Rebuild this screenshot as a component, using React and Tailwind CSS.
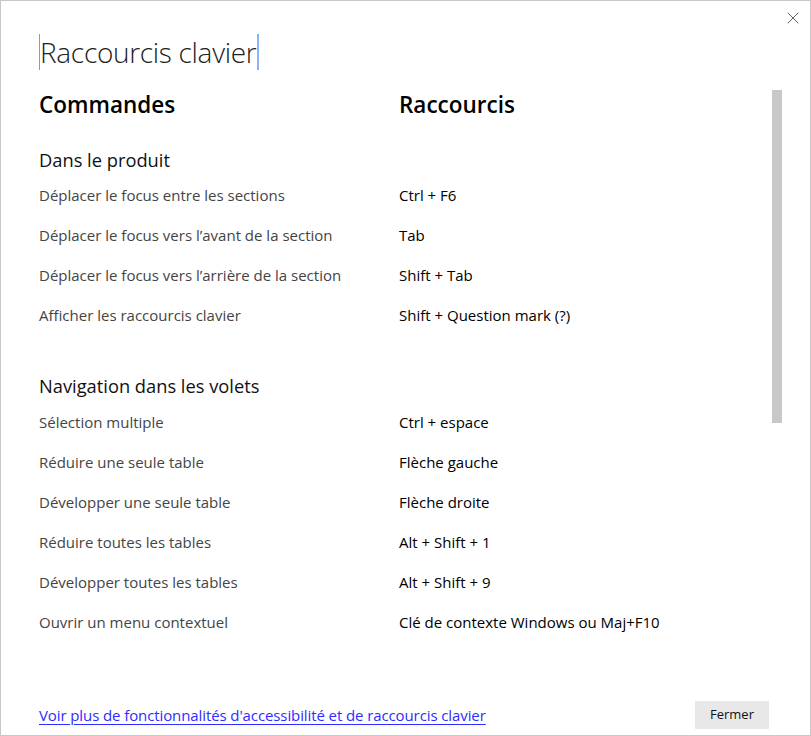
import { X } from 'lucide-react'

const sections = [
  {
    title: 'Dans le produit',
    mt: 'mt-[24px]',
    rows: [
      ['Déplacer le focus entre les sections', 'Ctrl + F6'],
      ['Déplacer le focus vers l’avant de la section', 'Tab'],
      ['Déplacer le focus vers l’arrière de la section', 'Shift + Tab'],
      ['Afficher les raccourcis clavier', 'Shift + Question mark (?)'],
    ],
  },
  {
    title: 'Navigation dans les volets',
    mt: 'mt-[35px]',
    rows: [
      ['Sélection multiple', 'Ctrl + espace'],
      ['Réduire une seule table', 'Flèche gauche'],
      ['Développer une seule table', 'Flèche droite'],
      ['Réduire toutes les tables', 'Alt + Shift + 1'],
      ['Développer toutes les tables', 'Alt + Shift + 9'],
      ['Ouvrir un menu contextuel', 'Clé de contexte Windows ou Maj+F10'],
    ],
  },
]

export default function App() {
  return (
    <div
      className="relative w-[811px] h-[736px] bg-white border border-[#c8c8c8] flex flex-col"
      style={{ fontFamily: '"Open Sans", "Noto Sans", sans-serif' }}
    >
      {/* Close */}
      <button className="absolute top-[6px] right-[6px] w-[22px] h-[22px] flex items-center justify-center text-[#555]">
        <X className="w-[20px] h-[20px]" strokeWidth={1.1} />
      </button>

      {/* Title */}
      <div className="pl-[38px] pt-[33px]">
        <h1 className="inline-block h-[36px] leading-[36px] text-[28px] font-light text-[#222] border-l border-[#999] border-r-2 border-r-[#8ab4f8] pr-[1px] tracking-[-0.3px]">
          Raccourcis clavier
        </h1>
      </div>

      {/* Body */}
      <div className="flex flex-1 pl-[38px] mt-[20px]">
        <div className="flex-1">
          <div className="flex h-[30px] items-center text-[22.5px] font-semibold text-black">
            <div className="w-[360px]">Commandes</div>
            <div>Raccourcis</div>
          </div>

          {sections.map((s) => (
            <div key={s.title} className={s.mt}>
              <h2 className="h-[31px] leading-[31px] text-[18.3px] text-[#111]">{s.title}</h2>
              <div className={s.title === 'Dans le produit' ? '' : 'mt-[1px]'}>
                {s.rows.map(([cmd, key]) => (
                  <div key={cmd} className="flex h-[40px] items-center text-[15px]">
                    <div className="w-[360px] text-[#444]">{cmd}</div>
                    <div className="text-black">{key}</div>
                  </div>
                ))}
              </div>
            </div>
          ))}
        </div>

        {/* Scrollbar */}
        <div className="w-[10px] mr-[28px]">
          <div className="h-[333px] bg-[#c8c8c8]" />
        </div>
      </div>

      {/* Footer */}
      <div className="flex items-center justify-between pl-[38px] pr-[41px] mb-[6px] h-[28px]">
        <a href="#" className="text-[15px] text-[#2d2dff] underline underline-offset-[3px] tracking-[-0.1px]">
          Voir plus de fonctionnalités d'accessibilité et de raccourcis clavier
        </a>
        <button className="w-[74px] h-[28px] bg-[#e8e8e8] text-[13px] text-[#111]">Fermer</button>
      </div>
    </div>
  )
}
